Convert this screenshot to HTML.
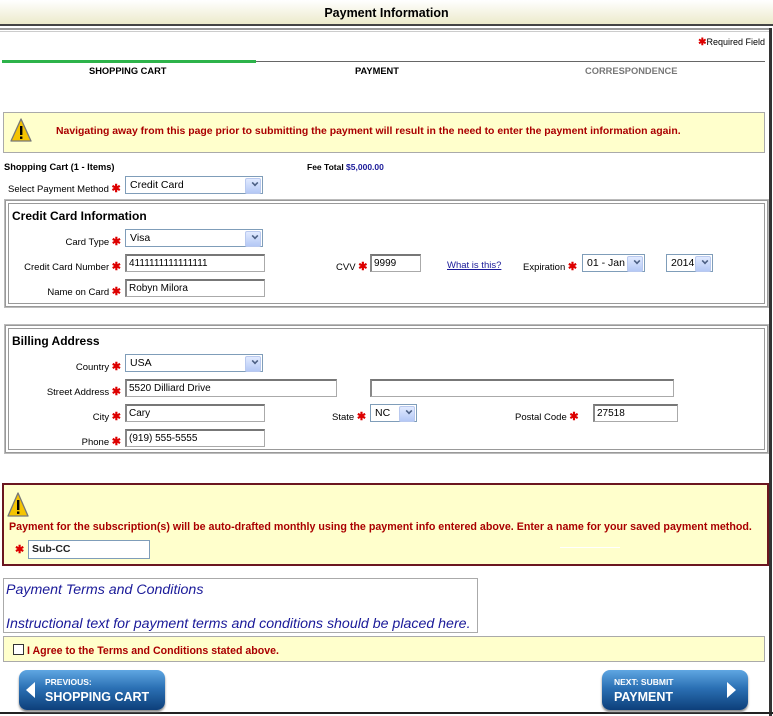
<!DOCTYPE html>
<html><head><meta charset="utf-8"><style>
*{margin:0;padding:0;box-sizing:border-box}
body{width:773px;height:716px;position:relative;overflow:hidden;background:#fff;font-family:"Liberation Sans",sans-serif;font-size:10px;color:#000}
.a{position:absolute}
.hdr{left:0;top:0;width:773px;height:26px;background:linear-gradient(#fff,#eceacb);border-bottom:2px solid #444;text-align:center;font-weight:bold;font-size:12.5px;line-height:27px}
.lbl{position:absolute;font-size:9.5px;text-align:right;white-space:nowrap}
.st{color:#d00;font-size:11px;font-weight:bold}
.inp{position:absolute;height:18px;border:1px solid #aaa;border-top:2px solid #777;border-left:2px solid #888;background:#fff;font-size:10px;line-height:15px;padding-left:2px;white-space:nowrap;overflow:hidden}
.sel{position:absolute;height:18px;border:1px solid #7f9db9;background:#fff;font-size:10.5px;line-height:16px;padding-left:4px}
.sel:after{content:"";position:absolute;right:1px;top:1px;width:14px;height:14px;background:linear-gradient(#e1eaff,#b4c8f5);border:1px solid #b9c9ef;border-radius:2px}
.sel i{position:absolute;right:4px;top:3px;z-index:2;width:6px;height:6px;border-right:2px solid #4d6185;border-bottom:2px solid #4d6185;transform:rotate(45deg) scale(.8)}
.box{position:absolute;border:4px double #999;outline:1px solid #bbb;background:#fff}
.ttl{position:absolute;font-weight:bold;font-size:12px}
.btn{position:absolute;width:146px;height:40px;border-radius:8px;background:linear-gradient(#5fa6e2 0%,#2b70b4 45%,#0d3f7a 100%);box-shadow:0 2px 2px #888;color:#fff;font-weight:bold}
.red{color:#a00;font-weight:bold;white-space:nowrap}
</style></head><body>
<div class="a hdr">Payment Information</div>
<div class="a" style="left:0;top:28px;width:770px;height:4px;border-top:2px solid #999;border-bottom:1px solid #ccc"></div>
<div class="a" style="left:769px;top:28px;width:3px;height:688px;background:#333"></div>
<div class="a" style="left:0;top:712px;width:773px;height:2px;background:#222"></div>
<div class="a" style="right:8px;top:37px;font-size:9px"><span class="st" style="font-size:10px">✱</span>Required Field</div>
<div class="a" style="left:2px;top:60px;width:254px;height:3px;background:#2db34a"></div>
<div class="a" style="left:256px;top:61px;width:509px;height:1px;background:#666"></div>
<div class="a" style="left:89px;top:66px;font-weight:bold;font-size:9.3px">SHOPPING CART</div>
<div class="a" style="left:355px;top:66px;font-weight:bold;font-size:9.3px">PAYMENT</div>
<div class="a" style="left:585px;top:66px;font-weight:bold;font-size:9.3px;color:#777">CORRESPONDENCE</div>

<div class="a" style="left:3px;top:112px;width:762px;height:41px;background:#ffffcc;border:1px solid #aaa"></div>
<svg class="a" style="left:10px;top:117px" width="22" height="27" viewBox="0 0 22 27"><path d="M11 2 L21 24 L1 24 Z" fill="#f5c400" stroke="#777" stroke-width="1.3" stroke-linejoin="round"/><rect x="10" y="9" width="2.4" height="9" fill="#000"/><rect x="10" y="19.5" width="2.4" height="2.4" fill="#000"/></svg>
<div class="a red" style="left:56px;top:126px;font-size:10.45px">Navigating away from this page prior to submitting the payment will result in the need to enter the payment information again.</div>

<div class="a" style="left:4px;top:162px;font-weight:bold;font-size:9.3px">Shopping Cart (1 - Items)</div>
<div class="a" style="left:307px;top:162px;font-weight:bold;font-size:8.5px">Fee Total <span style="color:#1a1a99">$5,000.00</span></div>
<div class="lbl" style="left:8px;top:182px">Select Payment Method <span class="st">✱</span></div>
<div class="sel" style="left:125px;top:176px;width:138px">Credit Card<i></i></div>

<div class="box" style="left:5px;top:200px;width:763px;height:107px"></div>
<div class="ttl" style="left:12px;top:209px">Credit Card Information</div>
<div class="lbl" style="right:652px;top:235px">Card Type <span class="st">✱</span></div>
<div class="sel" style="left:125px;top:229px;width:138px">Visa<i></i></div>
<div class="lbl" style="right:652px;top:260px">Credit Card Number <span class="st">✱</span></div>
<div class="inp" style="left:125px;top:254px;width:140px">4111111111111111</div>
<div class="lbl" style="left:336px;top:260px">CVV <span class="st">✱</span></div>
<div class="inp" style="left:370px;top:254px;width:51px">9999</div>
<div class="a" style="left:447px;top:260px;color:#1a1a99;text-decoration:underline;font-size:9.5px">What is this?</div>
<div class="lbl" style="left:523px;top:260px">Expiration <span class="st">✱</span></div>
<div class="sel" style="left:582px;top:254px;width:63px">01 - Jan<i></i></div>
<div class="sel" style="left:666px;top:254px;width:47px">2014<i></i></div>
<div class="lbl" style="right:652px;top:285px">Name on Card <span class="st">✱</span></div>
<div class="inp" style="left:125px;top:279px;width:140px">Robyn Milora</div>

<div class="box" style="left:5px;top:325px;width:763px;height:128px"></div>
<div class="ttl" style="left:12px;top:334px">Billing Address</div>
<div class="lbl" style="right:652px;top:360px">Country <span class="st">✱</span></div>
<div class="sel" style="left:125px;top:354px;width:138px">USA<i></i></div>
<div class="lbl" style="right:652px;top:385px">Street Address <span class="st">✱</span></div>
<div class="inp" style="left:125px;top:379px;width:212px">5520 Dilliard Drive</div>
<div class="inp" style="left:370px;top:379px;width:304px"></div>
<div class="lbl" style="right:652px;top:410px">City <span class="st">✱</span></div>
<div class="inp" style="left:125px;top:404px;width:140px">Cary</div>
<div class="lbl" style="left:332px;top:410px">State <span class="st">✱</span></div>
<div class="sel" style="left:370px;top:404px;width:47px">NC<i></i></div>
<div class="lbl" style="left:515px;top:410px">Postal Code <span class="st">✱</span></div>
<div class="inp" style="left:593px;top:404px;width:85px">27518</div>
<div class="lbl" style="right:652px;top:435px">Phone <span class="st">✱</span></div>
<div class="inp" style="left:125px;top:429px;width:140px">(919) 555-5555</div>

<div class="a" style="left:2px;top:483px;width:767px;height:83px;background:#ffffcc;border:2px solid #6b1620"></div>
<svg class="a" style="left:7px;top:491px" width="22" height="28" viewBox="0 0 22 28"><path d="M11 2 L21 25 L1 25 Z" fill="#f5c400" stroke="#777" stroke-width="1.3" stroke-linejoin="round"/><rect x="10" y="9" width="2.4" height="10" fill="#000"/><rect x="10" y="20.5" width="2.4" height="2.4" fill="#000"/></svg>
<div class="a red" style="left:9px;top:521px;font-size:10.7px">Payment for the subscription(s) will be auto-drafted monthly using the payment info entered above. Enter a name for your saved payment method.</div>
<div class="a st" style="left:15px;top:543px">✱</div>
<div class="a" style="left:28px;top:540px;width:122px;height:19px;border:1px solid #7f9db9;background:#fff;font-size:10.5px;font-weight:bold;padding-left:3px;line-height:17px;color:#222">Sub-CC</div>
<div class="a" style="left:560px;top:547px;width:60px;height:1px;background:#fff"></div>

<div class="a" style="left:3px;top:578px;width:475px;height:55px;border:1px solid #aaa;color:#1a1a99;font-style:italic;font-size:14.2px;padding-left:2px">
<div style="position:absolute;top:3px;left:2px">Payment Terms and Conditions</div>
<div style="position:absolute;top:37px;left:2px;white-space:nowrap">Instructional text for payment terms and conditions should be placed here.</div></div>
<div class="a" style="left:3px;top:636px;width:762px;height:26px;background:#ffffcc;border:1px solid #aaa"></div>
<div class="a" style="left:13px;top:644px;width:11px;height:11px;border:1px solid #333;background:#fff"></div>
<div class="a red" style="left:27px;top:645px;font-size:10.6px">I Agree to the Terms and Conditions stated above.</div>

<div class="btn" style="left:19px;top:670px">
<svg class="a" style="left:7px;top:12px" width="10" height="16"><path d="M9 0 L0 8 L9 16 Z" fill="#fff"/></svg>
<div class="a" style="left:26px;top:7px;font-size:8.5px">PREVIOUS:</div>
<div class="a" style="left:26px;top:20px;font-size:12.5px">SHOPPING CART</div></div>
<div class="btn" style="left:602px;top:670px">
<svg class="a" style="left:125px;top:12px" width="10" height="16"><path d="M0 0 L9 8 L0 16 Z" fill="#fff"/></svg>
<div class="a" style="left:12px;top:7px;font-size:8.5px">NEXT: SUBMIT</div>
<div class="a" style="left:12px;top:20px;font-size:12.5px">PAYMENT</div></div>
</body></html>
